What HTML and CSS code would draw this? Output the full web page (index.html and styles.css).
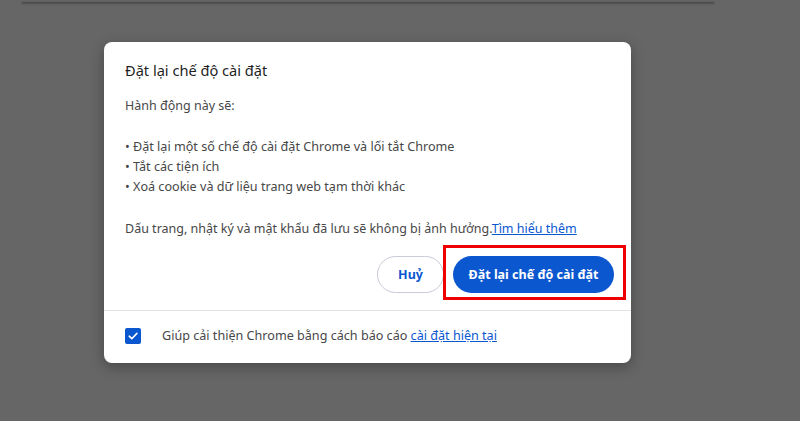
FILE: index.html
```html
<!DOCTYPE html>
<html lang="vi">
<head>
<meta charset="utf-8">
<title>Đặt lại chế độ cài đặt</title>
<link rel="stylesheet" href="styles.css">
</head>
<body>
<div class="topbar"></div>
<div class="dialog" role="dialog">
  <div class="main">
    <h1 class="title">Đặt lại chế độ cài đặt</h1>
    <p class="lead">Hành động này sẽ:</p>
    <ul class="list">
      <li>Đặt lại một số chế độ cài đặt Chrome và lối tắt Chrome</li>
      <li>Tắt các tiện ích</li>
      <li>Xoá cookie và dữ liệu trang web tạm thời khác</li>
    </ul>
    <p class="note">Dấu trang, nhật ký và mật khẩu đã lưu sẽ không bị ảnh hưởng.<a class="link" href="#">Tìm hiểu thêm</a></p>
    <div class="actions">
      <button class="btn btn-outline">Huỷ</button>
      <span class="highlight-wrap">
        <button class="btn btn-primary">Đặt lại chế độ cài đặt</button>
        <span class="highlight"></span>
      </span>
    </div>
  </div>
  <div class="footer">
    <span class="checkbox">
      <svg width="12" height="12" viewBox="0 0 12 12"><path d="M2.2 6.2 L4.8 8.7 L9.9 3.4" fill="none" stroke="#fff" stroke-width="1.6" stroke-linecap="round" stroke-linejoin="round"/></svg>
    </span>
    <span class="footer-text">Giúp cải thiện Chrome bằng cách báo cáo <a class="link" href="#">cài đặt hiện tại</a></span>
  </div>
</div>
</body>
</html>
```
FILE: styles.css
```css
html, body {
  margin: 0;
  padding: 0;
}
body {
  background: #666666;
  width: 800px;
  height: 421px;
  overflow: hidden;
  font-family: "Noto Sans", "Open Sans", sans-serif;
  color: #474747;
}
.topbar {
  margin-left: 22px;
  width: 692px;
  height: 2px;
  background: #636363;
  border-bottom: 1px solid #4a4a4a;
  box-shadow: 0 1px 2px rgba(0,0,0,0.25);
}
.dialog {
  margin-left: 104px;
  margin-top: 39px;
  width: 527px;
  height: 321px;
  background: #ffffff;
  border-radius: 8px;
  box-shadow: 0 4px 14px rgba(0,0,0,0.3);
  display: flex;
  flex-direction: column;
}
.main {
  padding: 18px 17px 17px 21px;
  border-bottom: 1px solid #e3e3e3;
}
.title {
  margin: 0;
  font-size: 14.6px;
  font-weight: 400;
  line-height: 20px;
  color: #1f1f1f;
}
.lead {
  margin: 16px 0 0;
  font-size: 12.5px;
  line-height: 20px;
}
.list {
  margin: 21px 0 0;
  padding: 0;
  list-style: none;
  font-size: 12.6px;
  line-height: 20px;
}
.list li::before {
  content: "• ";
}
.note {
  margin: 22px 0 0;
  font-size: 12.5px;
  line-height: 20px;
}
.link {
  color: #0b57d0;
  text-decoration: underline;
}
.actions {
  margin-top: 17px;
  display: flex;
  justify-content: flex-end;
  gap: 9px;
}
.btn {
  height: 37px;
  border-radius: 19px;
  font-family: inherit;
  font-size: 12.5px;
  font-weight: 700;
  cursor: pointer;
  padding: 0;
}
.btn-outline {
  width: 67px;
  background: #ffffff;
  border: 1px solid #c7cbd6;
  color: #0b57d0;
}
.btn-primary {
  width: 161px;
  background: #0b57d0;
  border: none;
  color: #ffffff;
}
.highlight-wrap {
  position: relative;
  display: inline-flex;
}
.highlight {
  position: absolute;
  left: -10px;
  right: -12px;
  top: -11px;
  bottom: -7px;
  border: 3px solid #ee0000;
  pointer-events: none;
}
.footer {
  flex: 1;
  display: flex;
  align-items: center;
  padding-left: 21px;
  padding-bottom: 2px;
}
.checkbox {
  width: 16px;
  height: 16px;
  border-radius: 2px;
  background: #0b57d0;
  display: inline-flex;
  align-items: center;
  justify-content: center;
}
.footer-text {
  margin-left: 21px;
  font-size: 12.6px;
  line-height: 20px;
}
```
